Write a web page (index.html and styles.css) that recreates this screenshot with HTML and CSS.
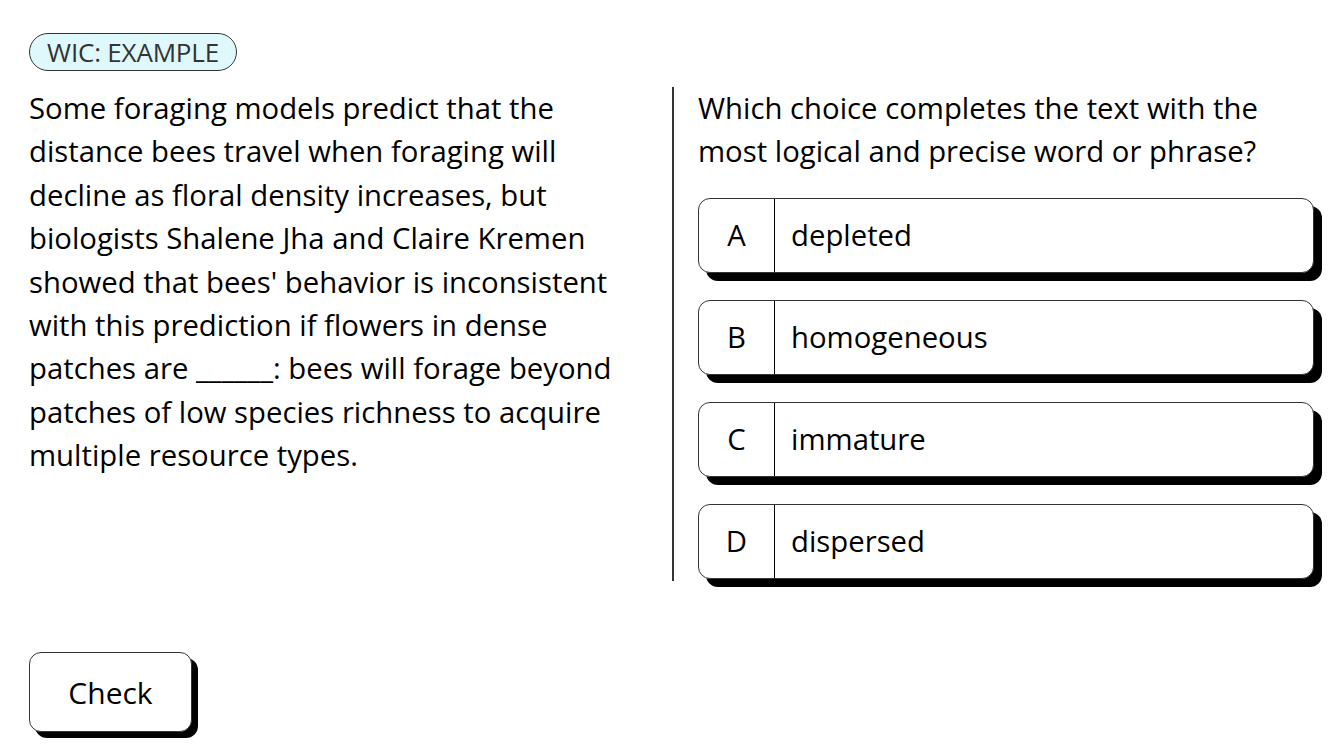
FILE: index.html
```html
<!DOCTYPE html>
<html lang="en">
<head>
<meta charset="utf-8">
<title>WIC: Example</title>
<link rel="stylesheet" href="styles.css">
</head>
<body>
<main class="page">
  <div class="badge">WIC: EXAMPLE</div>
  <div class="columns">
    <p class="passage">Some foraging models predict that the distance bees travel when foraging will decline as floral density increases, but biologists Shalene Jha and Claire Kremen showed that bees' behavior is inconsistent with this prediction if flowers in dense patches are ______: bees will forage beyond patches of low species richness to acquire multiple resource types.</p>
    <div class="divider"></div>
    <div class="question">
      <p class="prompt">Which choice completes the text with the most logical and precise word or phrase?</p>
      <ul class="options">
        <li class="option"><span class="letter">A</span><span class="answer">depleted</span></li>
        <li class="option"><span class="letter">B</span><span class="answer">homogeneous</span></li>
        <li class="option"><span class="letter">C</span><span class="answer">immature</span></li>
        <li class="option"><span class="letter">D</span><span class="answer">dispersed</span></li>
      </ul>
    </div>
  </div>
  <button class="check">Check</button>
</main>
</body>
</html>
```
FILE: styles.css
```css
* { box-sizing: border-box; }
html, body { margin: 0; padding: 0; background: #fff; }
body {
  font-family: "Open Sans", "Noto Sans", sans-serif;
  color: #000;
  width: 1344px;
  height: 754px;
  overflow: hidden;
}
.page {
  padding: 33px 0 0 29px;
  display: flex;
  flex-direction: column;
  align-items: flex-start;
}
.badge {
  height: 38px;
  width: 208px;
  display: flex;
  align-items: center;
  justify-content: center;
  border: 1px solid #333;
  border-radius: 19px;
  background: #dff8fc;
  color: #333;
  font-size: 26px;
  letter-spacing: -0.2px;
}
.columns {
  margin-top: 16px;
  display: flex;
  align-items: flex-start;
}
.passage {
  flex: 0 0 615px;
  margin: 0;
  font-size: 29.3px;
  line-height: 43.4px;
}
.divider {
  flex: 0 0 2px;
  background: #333;
  height: 494px;
  margin-left: 28px;
}
.question {
  flex: 0 0 616px;
  margin-left: 24px;
}
.prompt {
  margin: 0;
  font-size: 29.3px;
  line-height: 43.4px;
}
.options {
  list-style: none;
  margin: 24px 0 0 0;
  padding: 0;
  display: flex;
  flex-direction: column;
  gap: 27px;
}
.option {
  width: 616px;
  height: 75px;
  display: flex;
  align-items: stretch;
  border: 1px solid #333;
  border-radius: 12px;
  box-shadow: 8px 8px 0 #000;
  background: #fff;
  font-size: 29.3px;
}
.letter {
  width: 76px;
  flex: none;
  display: flex;
  align-items: center;
  justify-content: center;
  border-right: 1px solid #000;
}
.answer {
  display: flex;
  align-items: center;
  padding-left: 16px;
}
.check {
  margin-top: 71px;
  width: 163px;
  height: 80px;
  border: 1px solid #333;
  border-radius: 12px;
  background: #fff;
  box-shadow: 6px 6px 0 #000;
  font-family: "Open Sans", "Noto Sans", sans-serif;
  font-size: 30px;
  font-weight: 500;
  color: #000;
  padding: 0;
}
```
